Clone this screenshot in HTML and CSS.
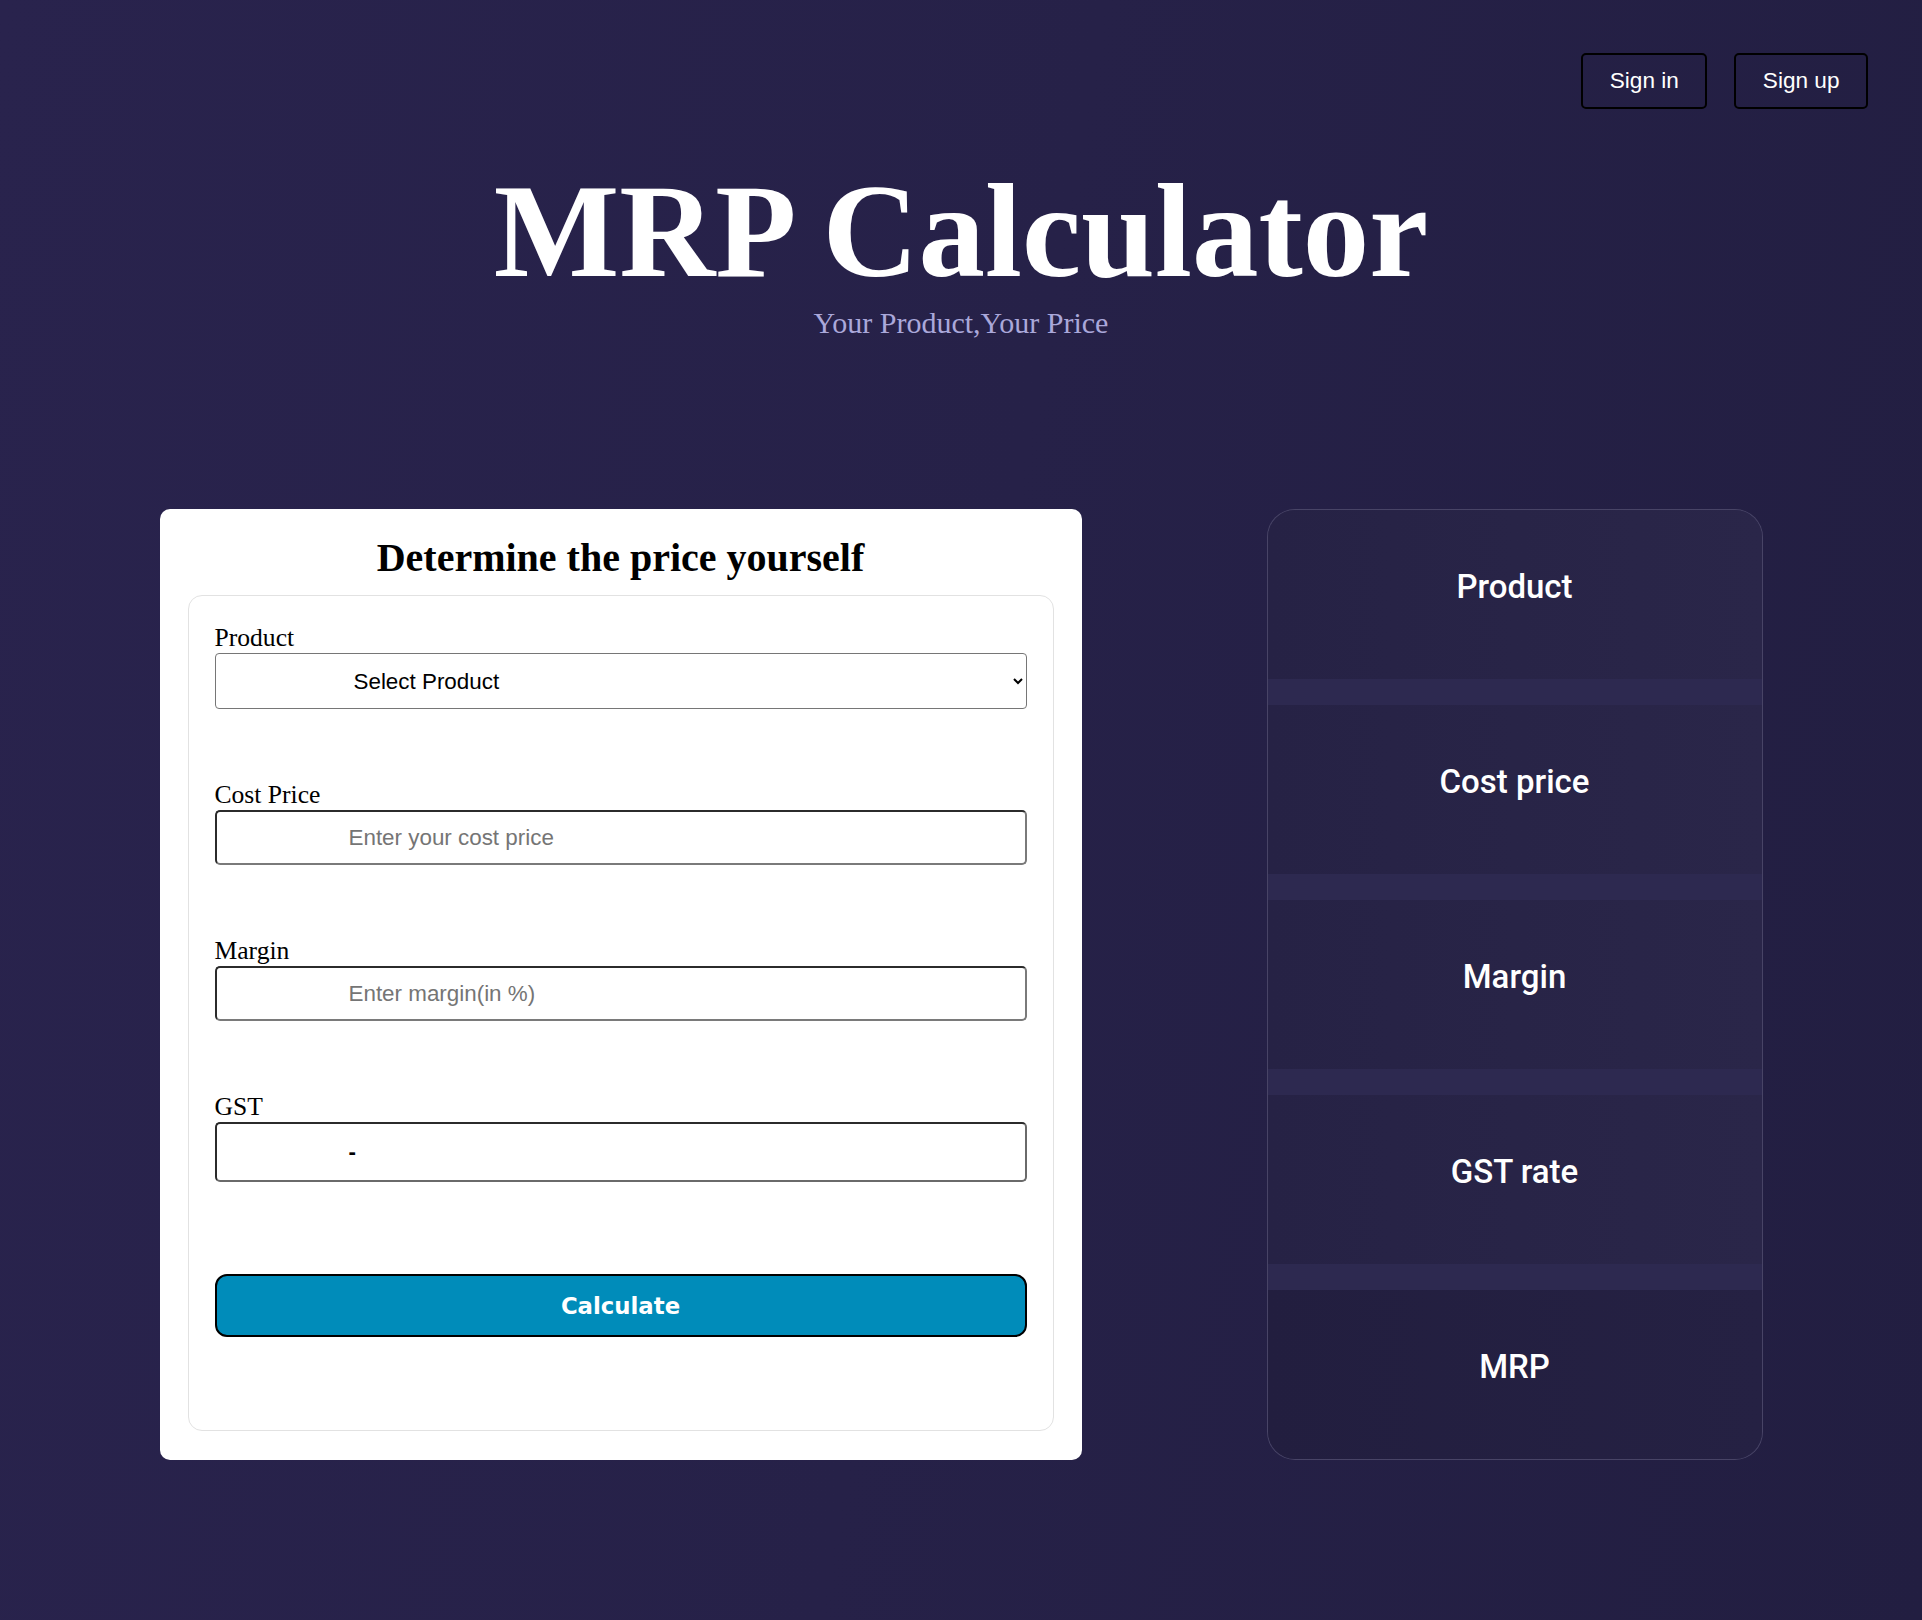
FILE: index.html
```html
<!DOCTYPE html>
<html lang="en">
<head>
<meta charset="utf-8">
<title>MRP Calculator</title>
<link rel="stylesheet" href="styles.css">
</head>
<body>
<div class="page">
  <nav class="topnav">
    <button class="nav-btn">Sign in</button>
    <button class="nav-btn">Sign up</button>
  </nav>
  <header class="hero">
    <h1 class="hero-title">MRP Calculator</h1>
    <p class="hero-sub">Your Product,Your Price</p>
  </header>
  <main class="content">
    <section class="calc-card">
      <h2 class="calc-title">Determine the price yourself</h2>
      <form class="calc-form">
        <div class="field">
          <label class="field-label">Product</label>
          <select class="field-select">
            <option>Select Product</option>
          </select>
        </div>
        <div class="field">
          <label class="field-label">Cost Price</label>
          <input class="field-input" type="text" placeholder="Enter your cost price">
        </div>
        <div class="field">
          <label class="field-label">Margin</label>
          <input class="field-input" type="text" placeholder="Enter margin(in %)">
        </div>
        <div class="field field-gst">
          <label class="field-label">GST</label>
          <div class="field-output">-</div>
        </div>
        <button type="button" class="calc-btn">Calculate</button>
      </form>
    </section>
    <aside class="result-panel">
      <div class="result-row">Product</div>
      <div class="result-row">Cost price</div>
      <div class="result-row">Margin</div>
      <div class="result-row">GST rate</div>
      <div class="result-row">MRP</div>
    </aside>
  </main>
</div>
</body>
</html>
```

FILE: styles.css
```css
html, body {
  margin: 0;
  padding: 0;
}
body {
  background: linear-gradient(100deg, #29234d 0%, #262148 50%, #221e41 100%);
  min-height: 1620px;
  font-family: "Liberation Serif", "Times New Roman", serif;
}
.page {
  min-height: 1620px;
}
.topnav {
  display: flex;
  justify-content: flex-end;
  gap: 27px;
  padding: 53px 54px 0 0;
}
.nav-btn {
  font-family: "Liberation Sans", Arial, sans-serif;
  font-size: 22.6px;
  line-height: 26px;
  color: #ffffff;
  background: transparent;
  border: 2px solid #000;
  border-radius: 5px;
  padding: 13px 26.5px;
  cursor: pointer;
}
.hero {
  text-align: center;
}
.hero-title {
  margin: 45px 0 0;
  font-family: "Liberation Serif", "Times New Roman", serif;
  font-weight: bold;
  font-size: 133px;
  line-height: normal;
  color: #ffffff;
}
.hero-sub {
  margin: -2px 0 0;
  font-size: 30px;
  line-height: normal;
  color: #aaa8da;
}
.content {
  width: 1603px;
  margin: 169px auto 0;
  display: flex;
  justify-content: space-between;
  align-items: stretch;
}
.calc-card {
  width: 922px;
  box-sizing: border-box;
  background: #ffffff;
  border-radius: 10px;
  padding: 25px 28px 29px;
}
.calc-title {
  margin: 0 0 14px;
  text-align: center;
  font-size: 40px;
  font-weight: bold;
  line-height: normal;
  color: #000;
}
.calc-form {
  border: 1px solid #e2e2e2;
  border-radius: 14px;
  padding: 27px 26px 93px;
}
.field {
  margin-bottom: 71px;
}
.field-gst {
  margin-bottom: 92px;
}
.field-label {
  display: block;
  font-size: 25.6px;
  line-height: 30px;
  color: #000;
}
.field-select {
  display: block;
  width: 100%;
  height: 56px;
  box-sizing: border-box;
  font-family: "Liberation Sans", Arial, sans-serif;
  font-size: 22.4px;
  color: #000;
  background: #fff;
  border: 1px solid #767676;
  border-radius: 4px;
  padding: 0 10px 0 134px;
}
.field-input {
  display: block;
  width: 100%;
  height: 55px;
  box-sizing: border-box;
  font-family: "Liberation Sans", Arial, sans-serif;
  font-size: 22.4px;
  color: #000;
  background: #fff;
  border: 2px solid;
  border-color: #2b2b2b #7a7a7a #7a7a7a #2b2b2b;
  border-radius: 5px;
  padding: 0 10px 0 132px;
  outline: none;
}
.field-input::placeholder {
  color: #757575;
}
.field-output {
  height: 60px;
  box-sizing: border-box;
  border: 2px solid;
  border-color: #2b2b2b #6a6a6a #6a6a6a #2b2b2b;
  border-radius: 5px;
  padding-left: 132px;
  display: flex;
  align-items: center;
  font-family: "Liberation Sans", Arial, sans-serif;
  font-size: 22.4px;
  font-weight: bold;
  color: #000;
}
.calc-btn {
  display: block;
  width: 100%;
  height: 63px;
  box-sizing: border-box;
  background: #008cba;
  border: 2px solid #000;
  border-radius: 12px;
  color: #fff;
  font-family: "DejaVu Sans", sans-serif;
  font-weight: bold;
  font-size: 22.8px;
  cursor: pointer;
}
.result-panel {
  width: 496px;
  box-sizing: border-box;
  border: 1px solid rgba(255, 255, 255, 0.13);
  border-radius: 28px;
  overflow: hidden;
  display: flex;
  flex-direction: column;
  gap: 26px;
  background: #2d2950;
}
.result-row {
  flex: 1;
  display: flex;
  align-items: center;
  justify-content: center;
  padding-bottom: 16px;
  background: linear-gradient(90deg, #262245, #2a2649);
  font-family: Roboto, "Liberation Sans", sans-serif;
  font-weight: 500;
  font-size: 33px;
  color: #ffffff;
}
.result-row:last-child {
  background: linear-gradient(90deg, #221e3f, #252143);
}
```
